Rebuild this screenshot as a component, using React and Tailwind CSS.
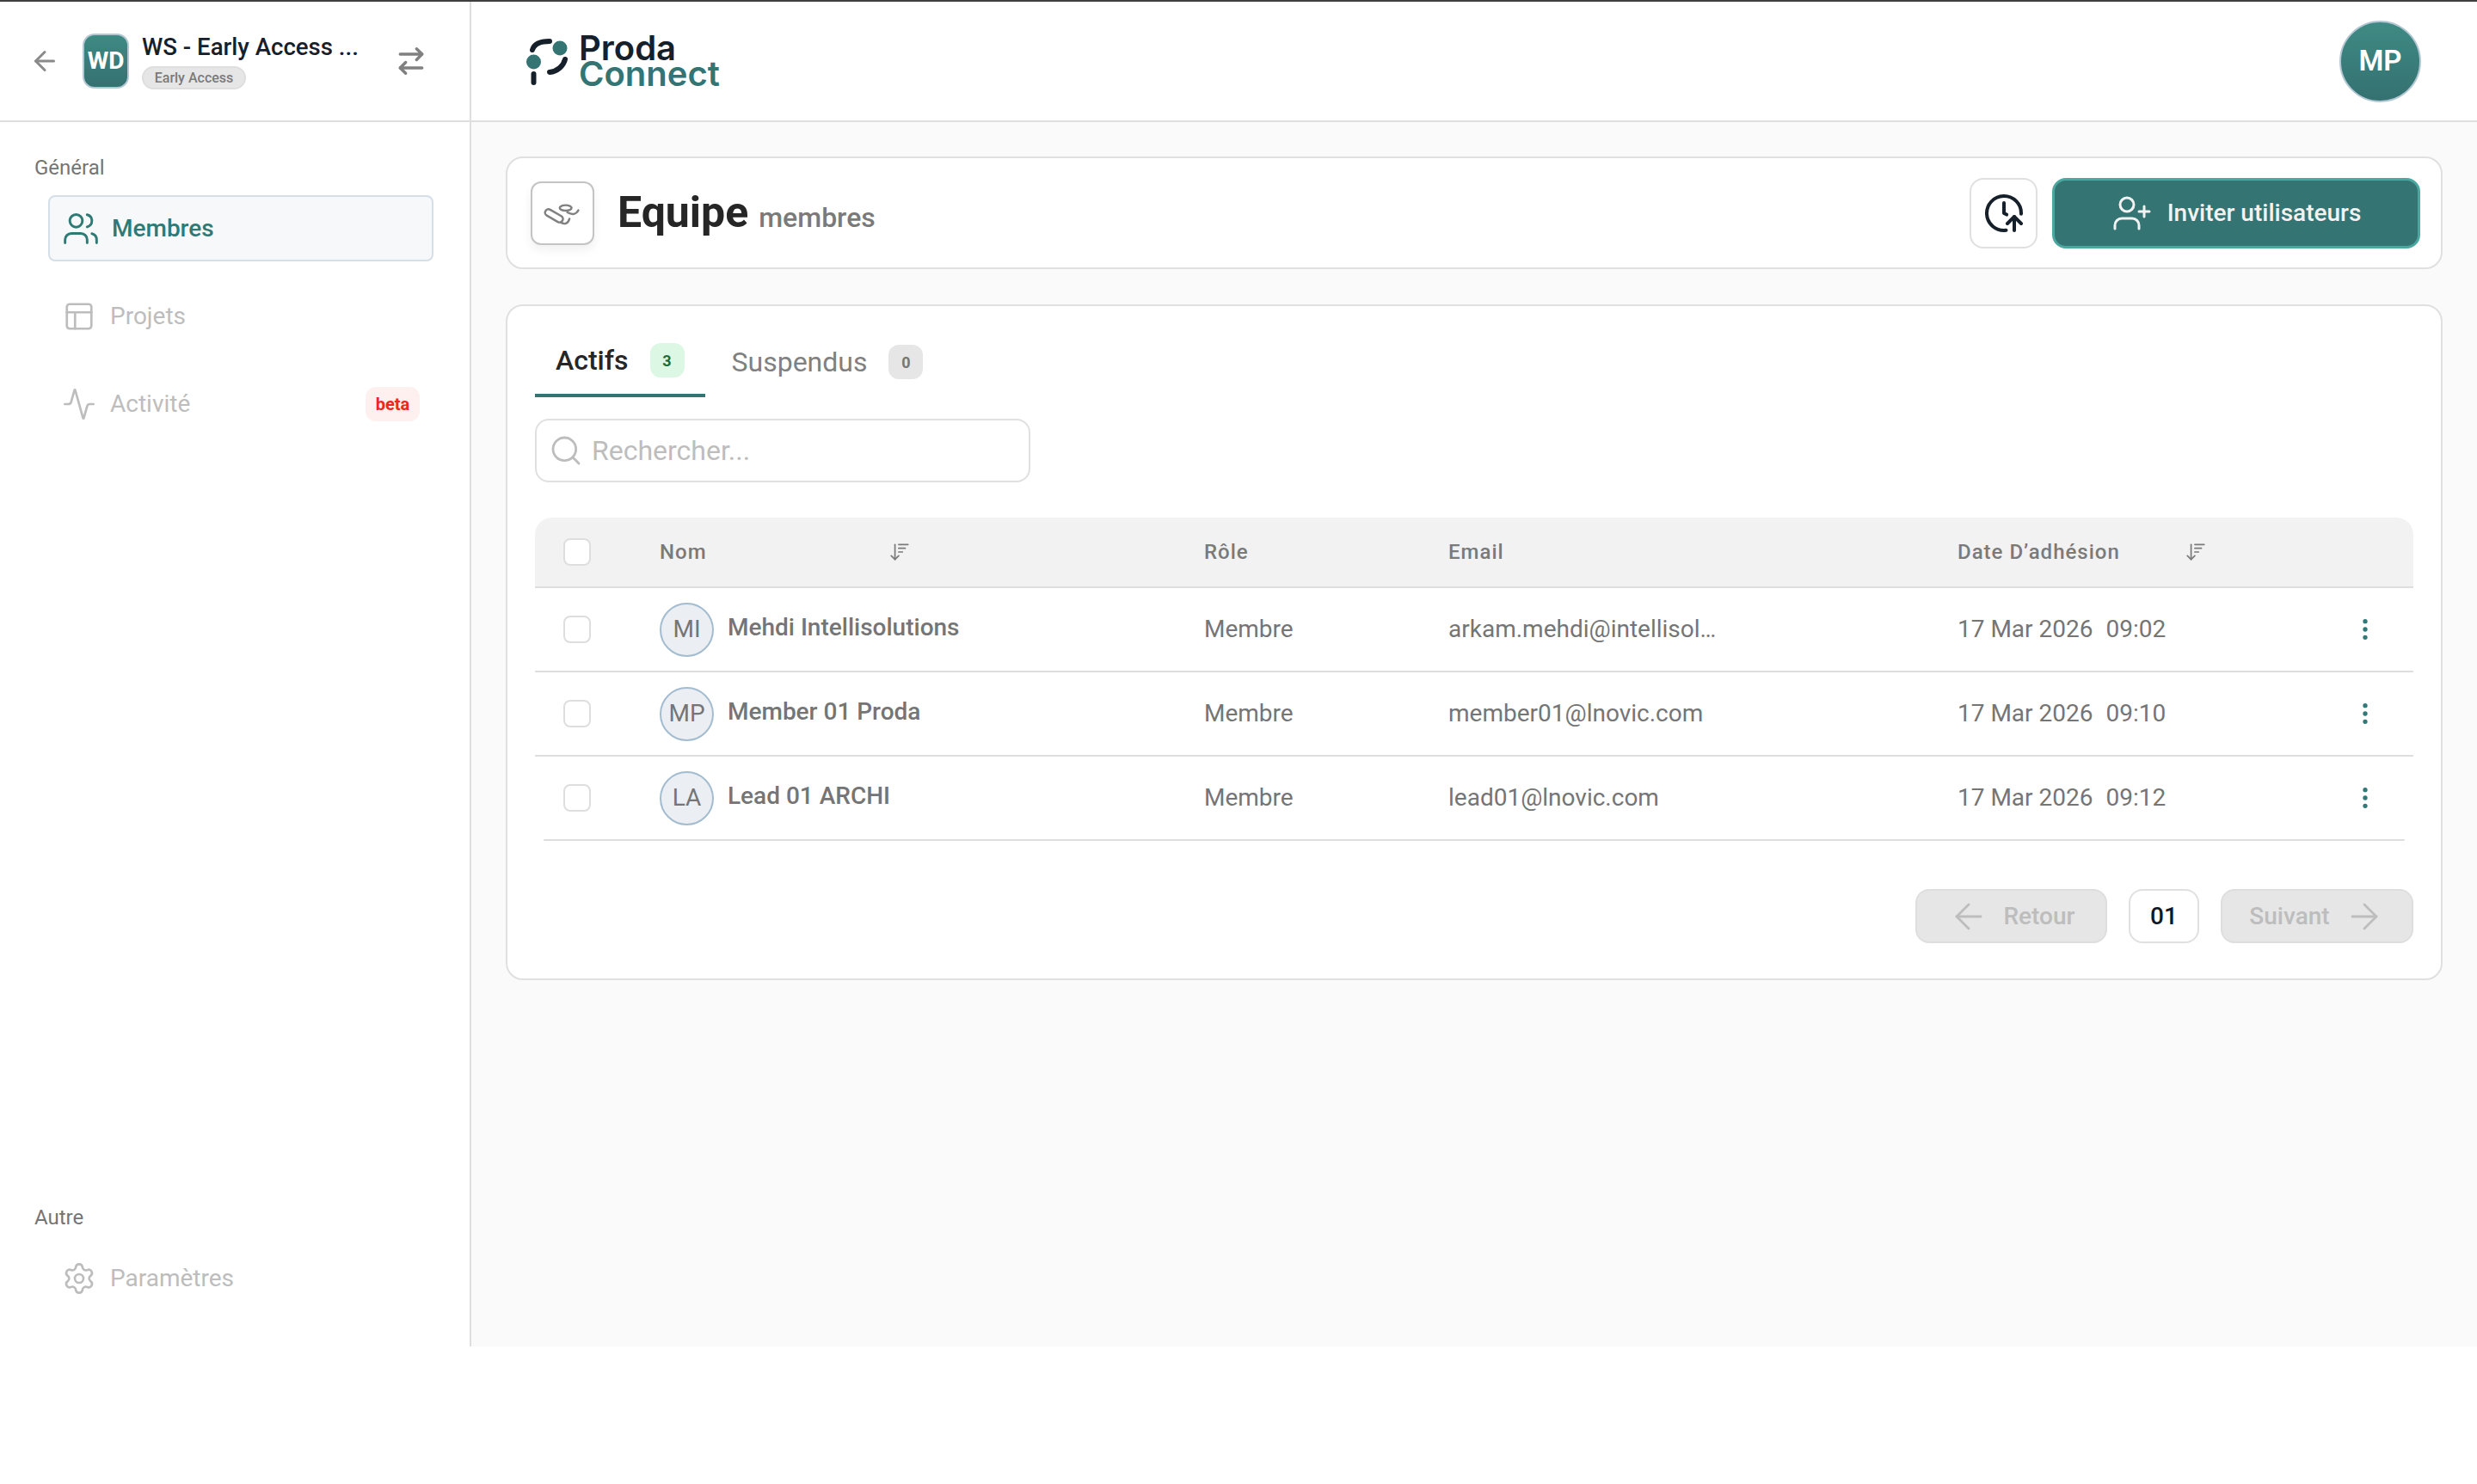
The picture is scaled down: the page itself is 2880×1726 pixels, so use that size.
import React from "react";
import {
  Activity,
  ArrowDownWideNarrow,
  ArrowLeft,
  ArrowRight,
  ArrowRightLeft,
  ClockArrowUp,
  EllipsisVertical,
  PanelsTopLeft,
  Search,
  Settings,
  UserPlus,
  Users,
} from "lucide-react";

const members = [
  { initials: "MI", name: "Mehdi Intellisolutions", email: "arkam.mehdi@intellisol…", time: "09:02" },
  { initials: "MP", name: "Member 01 Proda", email: "member01@lnovic.com", time: "09:10" },
  { initials: "LA", name: "Lead 01 ARCHI", email: "lead01@lnovic.com", time: "09:12" },
];

const cols = "grid grid-cols-[145px_633px_284px_592px_1fr] items-center";

const Checkbox = () => (
  <div className="ml-[33px] w-[32px] h-[32px] rounded-[8px] border-2 border-[#dedede] bg-white"></div>
);

const LogoMark = () => (
  <svg width="52" height="60" viewBox="0 0 52 60" fill="none">
    <circle cx="41" cy="15" r="8.5" fill="#347473" />
    <circle cx="10.5" cy="31" r="8.5" fill="#347473" />
    <path d="M9 17C11 10 18 7 29 7" stroke="#16202a" strokeWidth="6" strokeLinecap="round" />
    <path d="M47 28C45 36 38 42 29 43" stroke="#16202a" strokeWidth="6" strokeLinecap="round" />
    <path d="M10.5 45V55" stroke="#16202a" strokeWidth="6" strokeLinecap="round" />
  </svg>
);

const TeamIcon = () => (
  <svg width="50" height="36" viewBox="0 -6 50.6 36" fill="none" stroke="#808080" strokeWidth="2.5">
    <rect x="3.8" y="11" width="23" height="8" rx="4" transform="rotate(30 15.3 15)" />
    <ellipse cx="29" cy="5.7" rx="7" ry="3.2" />
    <path d="M31 11Q40 16 44 8.5" strokeLinecap="round" />
    <path d="M23.5 23Q31 27 33.5 18.5" strokeLinecap="round" />
  </svg>
);

const App = () => {
  return (
    <div className="font-['Roboto',sans-serif] bg-white min-h-[1726px]">
      <div className="h-[1566px] flex flex-col border-t-2 border-[#3f3f3f]">
        <header className="h-[140px] shrink-0 flex items-center border-b-2 border-[#dedede] bg-white">
          <div className="w-[548px] h-full flex items-center pl-[34px] border-r-2 border-[#dedede]">
            <ArrowLeft size={36} strokeWidth={2} className="text-[#8a8a8a] shrink-0" />
            <div className="ml-[26px] w-[54px] h-[64px] rounded-[14px] border-2 border-[#b3c7d3] bg-gradient-to-b from-[#3f8a84] to-[#347170] flex items-center justify-center text-white text-[28px] font-bold shrink-0">
              WD
            </div>
            <div className="ml-[15px] w-[294px] shrink-0">
              <div className="text-[27.6px] leading-[34px] font-medium text-[#16202a] whitespace-nowrap">
                WS - Early Access ...
              </div>
              <div className="mt-[5px] w-[121px] h-[27px] rounded-full border-2 border-[#dedede] bg-[#e6e6e6] flex items-center justify-center text-[16px] font-medium text-[#7a7a7a]">
                Early Access
              </div>
            </div>
            <ArrowRightLeft size={38} strokeWidth={2.2} className="text-[#808080] shrink-0" />
          </div>
          <div className="flex-1 flex items-center justify-between pl-[62px] pr-[65px]">
            <div className="flex items-center gap-[11px]">
              <LogoMark />
              <div className="font-['Inter',sans-serif] font-semibold text-[40px] leading-[30px]">
                <div className="text-[#16202a]">Proda</div>
                <div className="text-[#347473]">Connect</div>
              </div>
            </div>
            <div className="w-[95px] h-[95px] rounded-full border-2 border-[#b3c7d3] bg-gradient-to-b from-[#3f8a84] to-[#347170] flex items-center justify-center text-white text-[33px] font-semibold">
              MP
            </div>
          </div>
        </header>

        <div className="flex-1 flex min-h-0">
          <aside className="w-[548px] shrink-0 border-r-2 border-[#dedede] bg-white flex flex-col justify-between pt-[39px] pb-[41px]">
            <div>
              <div className="pl-[40px] text-[24px] leading-[28px] text-[#757575]">Général</div>
              <div className="mt-[18px] ml-[56px] w-[448px] flex flex-col gap-[25px]">
                <div className="h-[77px] rounded-[8px] border-2 border-[#d4dfe8] bg-[#f7f8fa] flex items-center pl-[14px] gap-[14px] text-[#2f7a74] text-[28px] font-medium">
                  <Users size={44} strokeWidth={1.6} />
                  <span>Membres</span>
                </div>
                <div className="h-[77px] flex items-center pl-[16px] gap-[16px] text-[#bdbdbd] text-[28px]">
                  <div className="w-[40px] flex justify-center">
                    <PanelsTopLeft size={38} strokeWidth={1.7} />
                  </div>
                  <span>Projets</span>
                </div>
                <div className="h-[77px] flex items-center pl-[16px] pr-[16px] gap-[16px] text-[#bdbdbd] text-[28px]">
                  <div className="w-[40px] flex justify-center">
                    <Activity size={42} strokeWidth={1.6} />
                  </div>
                  <span className="flex-1">Activité</span>
                  <span className="w-[63px] h-[40px] rounded-[12px] bg-[#fdf0ef] flex items-center justify-center text-[20px] font-bold text-[#e8291c]">
                    beta
                  </span>
                </div>
              </div>
            </div>
            <div>
              <div className="pl-[40px] text-[24px] leading-[28px] text-[#757575]">Autre</div>
              <div className="mt-[18px] ml-[56px] w-[448px] h-[77px] flex items-center pl-[16px] gap-[16px] text-[#bdbdbd] text-[28px]">
                <div className="w-[40px] flex justify-center">
                  <Settings size={42} strokeWidth={1.6} />
                </div>
                <span>Paramètres</span>
              </div>
            </div>
          </aside>

          <main className="flex-1 bg-[#fafafa] px-[40px] pt-[40px]">
            <div className="h-[131px] rounded-[20px] border-2 border-[#e0e0e0] bg-white flex items-center justify-between pl-[27px] pr-[24px]">
              <div className="flex items-center gap-[27px]">
                <div className="w-[74px] h-[74px] rounded-[12px] border-2 border-[#c4c4c4] bg-white shadow-[0_6px_12px_rgba(0,0,0,0.06)] flex items-center justify-center">
                  <TeamIcon />
                </div>
                <div className="flex items-baseline gap-[12px]">
                  <span className="text-[50px] leading-[56px] font-bold text-[#262626]">Equipe</span>
                  <span className="text-[32px] font-medium text-[#7a7a7a]">membres</span>
                </div>
              </div>
              <div className="flex items-center gap-[17px]">
                <div className="w-[79px] h-[82px] rounded-[16px] border-2 border-[#e0e0e0] flex items-center justify-center text-[#16202a]">
                  <ClockArrowUp size={48} strokeWidth={2} />
                </div>
                <div className="w-[428px] h-[82px] rounded-[16px] border-[3px] border-[#4aa8a0] bg-[#347473] flex items-center justify-center gap-[17px] text-[#f2f2f2] text-[28px] font-medium">
                  <UserPlus size={48} strokeWidth={1.5} />
                  <span>Inviter utilisateurs</span>
                </div>
              </div>
            </div>

            <div className="mt-[41px] rounded-[20px] border-2 border-[#e0e0e0] bg-white px-[32px] pt-[43px] pb-[41px]">
              <div className="flex items-start gap-[7px]">
                <div className="px-[24px] pb-[19px] border-b-4 border-[#347473] flex items-center gap-[25px]">
                  <span className="text-[32px] leading-[40px] font-medium text-[#262626]">Actifs</span>
                  <span className="w-[40px] h-[40px] rounded-[12px] bg-[#dcf7e3] flex items-center justify-center text-[18px] font-bold text-[#1f6b3e]">
                    3
                  </span>
                </div>
                <div className="px-[24px] pt-[2px] flex items-center gap-[25px]">
                  <span className="text-[32px] leading-[40px] text-[#808080]">Suspendus</span>
                  <span className="w-[40px] h-[40px] rounded-[12px] bg-[#e6e6e6] flex items-center justify-center text-[18px] font-bold text-[#777777]">
                    0
                  </span>
                </div>
              </div>

              <div className="mt-[25px] w-[576px] h-[74px] rounded-[16px] border-2 border-[#e0e0e0] flex items-center pl-[14px] gap-[10px]">
                <Search size={40} strokeWidth={1.7} className="text-[#bdbdbd] shrink-0" />
                <input
                  placeholder="Rechercher..."
                  className="flex-1 min-w-0 outline-none text-[32px] placeholder:text-[#bdbdbd]"
                />
              </div>

              <div className="mt-[41px]">
                <div className={`${cols} h-[82px] rounded-t-[20px] bg-[#f2f2f2] border-b-2 border-[#dedede] text-[24px] font-medium tracking-[1px] text-[#7a7a7a]`}>
                  <Checkbox />
                  <div className="flex items-center">
                    <span className="w-[266px]">Nom</span>
                    <ArrowDownWideNarrow size={26} strokeWidth={1.6} />
                  </div>
                  <span>Rôle</span>
                  <span>Email</span>
                  <div className="flex items-center">
                    <span className="w-[264px]">Date D’adhésion</span>
                    <ArrowDownWideNarrow size={26} strokeWidth={1.6} />
                  </div>
                </div>

                {members.map((member, index) => {
                  return (
                    <div
                      key={member.initials}
                      className={
                        index === members.length - 1
                          ? `${cols} h-[96px] text-[28px] text-[#757575]`
                          : `${cols} h-[98px] border-b-2 border-[#dedede] text-[28px] text-[#757575]`
                      }
                    >
                      <Checkbox />
                      <div className="flex items-center gap-[16px]">
                        <div className="w-[63px] h-[63px] rounded-full border-2 border-[#a3bccf] bg-[#ebeff4] flex items-center justify-center">
                          {member.initials}
                        </div>
                        <span className="font-medium -mt-[4px]">{member.name}</span>
                      </div>
                      <span>Membre</span>
                      <span>{member.email}</span>
                      <div className="flex items-center justify-between pr-[40px]">
                        <span className="flex gap-[15px]">
                          <span>17 Mar 2026</span>
                          <span>{member.time}</span>
                        </span>
                        <EllipsisVertical size={32} strokeWidth={2} className="text-[#2f7a78]" />
                      </div>
                    </div>
                  );
                })}
                <div className="mx-[10px] h-[2px] rounded-full bg-[#dedede]"></div>
              </div>

              <div className="mt-[56px] flex justify-end gap-[25px] text-[28px] font-medium">
                <div className="w-[223px] h-[63px] rounded-[16px] border-2 border-[#dedede] bg-[#e6e6e6] flex items-center justify-center gap-[17px] text-[#bdbdbd]">
                  <ArrowLeft size={48} strokeWidth={1.4} />
                  <span>Retour</span>
                </div>
                <div className="w-[82px] h-[63px] rounded-[16px] border-2 border-[#e0e0e0] flex items-center justify-center text-[#111827]">
                  01
                </div>
                <div className="w-[224px] h-[63px] rounded-[16px] border-2 border-[#dedede] bg-[#e6e6e6] flex items-center justify-center gap-[16px] text-[#bdbdbd]">
                  <span>Suivant</span>
                  <ArrowRight size={48} strokeWidth={1.4} />
                </div>
              </div>
            </div>
          </main>
        </div>
      </div>
    </div>
  );
};

export default App;
